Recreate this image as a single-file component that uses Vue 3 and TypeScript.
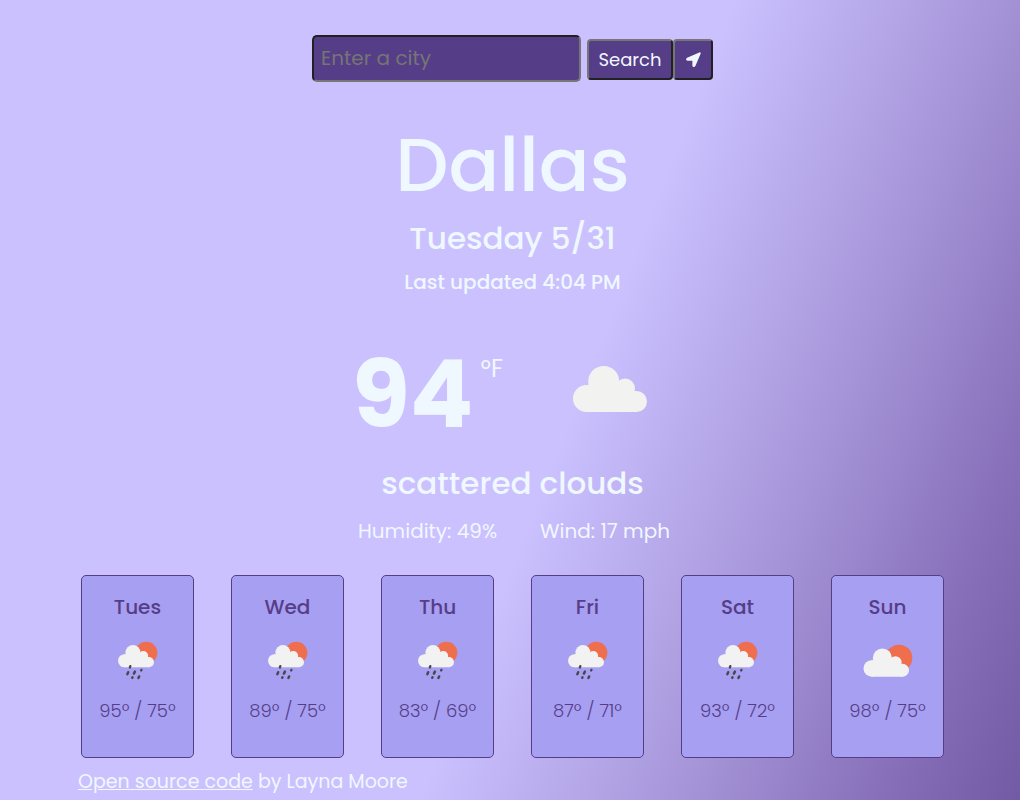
<script setup lang="ts">
import { ref } from 'vue'

interface ForecastDay {
  day: string
  high: number
  low: number
  rain: boolean
}

const city = ref('')

const forecast: ForecastDay[] = [
  { day: 'Tues', high: 95, low: 75, rain: true },
  { day: 'Wed', high: 89, low: 75, rain: true },
  { day: 'Thu', high: 83, low: 69, rain: true },
  { day: 'Fri', high: 87, low: 71, rain: true },
  { day: 'Sat', high: 93, low: 72, rain: true },
  { day: 'Sun', high: 98, low: 75, rain: false },
]
</script>

<template>
  <main class="app">
    <form class="search" @submit.prevent>
      <input v-model="city" class="field" type="text" placeholder="Enter a city" aria-label="City" />
      <button class="btn" type="submit">Search</button>
      <button class="btn locate" type="button" aria-label="Use my location">
        <svg viewBox="0 0 16 16" width="15" height="15" aria-hidden="true">
          <path d="M14.2 0.4 1.2 6C-.5 6.8-.1 9.2 1.7 9.2H6.8V14.3C6.8 16.1 9.2 16.5 10 14.8L15.6 1.8C16 .8 15.2 0 14.2.4Z" fill="currentColor" />
        </svg>
      </button>
    </form>

    <h1 class="city">Dallas</h1>
    <h2 class="date">Tuesday 5/31</h2>
    <h3 class="updated">Last updated 4:04 PM</h3>

    <section class="current">
      <strong class="temp">94</strong>
      <span class="unit">ºF</span>
      <svg class="now-icon" viewBox="0 0 100 100" role="img" aria-label="scattered clouds">
        <g fill="#f2f2f0">
          <circle cx="26.5" cy="56.5" r="13.5" />
          <circle cx="43.7" cy="39.5" r="15.5" />
          <circle cx="65" cy="46.5" r="10" />
          <circle cx="76.5" cy="59.5" r="10.5" />
          <path d="M26 43H60L77 50V70H26Z" />
        </g>
      </svg>
    </section>

    <h2 class="description">scattered clouds</h2>
    <div class="details">
      <span>Humidity: 49%</span>
      <span>Wind: 17 mph</span>
    </div>

    <section class="forecast" aria-label="Forecast">
      <article v-for="item in forecast" :key="item.day" class="card">
        <h4 class="day">{{ item.day }}</h4>
        <svg class="icon" viewBox="0 0 50 50" aria-hidden="true">
          <circle v-if="item.rain" cx="33.3" cy="17.7" r="11" fill="#ee6e4d" />
          <circle v-else cx="36" cy="23" r="13.3" fill="#ee6e4d" />
          <g
            fill="#f2f2f2"
            :transform="item.rain ? 'translate(-1.3 -1.7) scale(.486)' : 'translate(-7.5 -1.3) scale(.615)'"
          >
            <circle cx="26.5" cy="56.5" r="13.5" />
            <circle cx="43.7" cy="39.5" r="15.5" />
            <circle cx="65" cy="46.5" r="10" />
            <circle cx="76.5" cy="59.5" r="10.5" />
            <path d="M26 43H60L77 50V70H26Z" />
          </g>
          <path
            v-if="item.rain"
            d="M17.3 31.2 16.9 32.4M15.2 37.2 14.3 39.2M21.9 36.6 20.9 38.6M28.4 34.9 28.2 35.4M19.5 42.3 19.2 42.8M26.2 41.4 25.4 43"
            stroke="#48484a"
            stroke-width="2.4"
            stroke-linecap="round"
            fill="none"
          />
        </svg>
        <p class="range">{{ item.high }}º / {{ item.low }}º</p>
      </article>
    </section>

    <footer class="footer"><a href="#">Open source code</a> by Layna Moore</footer>
  </main>
</template>

<style>
body {
  margin: 0;
}
</style>

<style scoped>
.app {
  box-sizing: border-box;
  min-height: 100vh;
  padding: 35px 76px 6px 81px;
  display: flex;
  flex-direction: column;
  font-family: Poppins, Inter, "Noto Sans", sans-serif;
  color: aliceblue;
  text-align: center;
  background: linear-gradient(111.5deg, #cbc1ff 0%, #cbc1ff 55%, #a999dc 73%, #8871ba 89%, #735aa4 100%);
}

h1,
h2,
h3,
h4,
p {
  margin: 0;
  font-weight: 500;
}

.search {
  display: flex;
  justify-content: center;
  align-items: flex-start;
}

.field {
  box-sizing: border-box;
  width: 269px;
  height: 47px;
  margin-right: 6px;
  padding: 0 7px 2px;
  border: 2px inset #767676;
  border-radius: 5px;
  background: #563d87;
  color: aliceblue;
  font: 400 20px/28px Poppins, Inter, "Noto Sans", sans-serif;
}

.field::placeholder {
  color: #757575;
}

.btn {
  box-sizing: border-box;
  width: 86px;
  height: 41px;
  margin-top: 4px;
  padding: 0;
  border: 2px outset #767676;
  border-radius: 4px;
  background: #563d87;
  color: aliceblue;
  font: 400 18px/28px Poppins, Inter, "Noto Sans", sans-serif;
}

.locate {
  display: flex;
  align-items: center;
  justify-content: center;
  width: 40px;
}

.city {
  margin-top: 36px;
  font-size: 75px;
  line-height: 94px;
}

.date {
  margin-top: 6px;
  font-size: 31px;
  line-height: 40px;
}

.updated {
  margin-top: 12px;
  font-size: 20px;
  line-height: 24px;
}

.current {
  display: flex;
  justify-content: center;
  margin-top: 44px;
  padding-right: 13px;
}

.temp {
  font-size: 94px;
  font-weight: 700;
  line-height: 112px;
}

.unit {
  margin: 17px 57px 0 7px;
  font-size: 24px;
  line-height: 28px;
}

.now-icon {
  width: 100px;
  height: 100px;
  margin-top: 4px;
}

.description {
  margin-top: 13px;
  font-size: 31px;
  line-height: 40px;
}

.details {
  display: flex;
  justify-content: center;
  gap: 43px;
  margin-top: 16px;
  padding-left: 3px;
  font-size: 20px;
  line-height: 24px;
}

.forecast {
  display: grid;
  grid-template-columns: repeat(6, 1fr);
  gap: 37px;
  margin-top: 32px;
}

.card {
  padding: 19px 0 34px;
  border: 1px solid #563d87;
  border-radius: 5px;
  background: #a69ff2;
  color: #563d87;
}

.day {
  font-size: 20px;
  line-height: 24px;
}

.icon {
  display: block;
  width: 50px;
  height: 50px;
  margin: 16px auto 14px;
}

.range {
  font-size: 18px;
  font-weight: 300;
  line-height: 24px;
}

.footer {
  margin: 12px 0 0 -3px;
  font-size: 19px;
  line-height: 24px;
  text-align: left;
}

.footer a {
  color: inherit;
}
</style>
